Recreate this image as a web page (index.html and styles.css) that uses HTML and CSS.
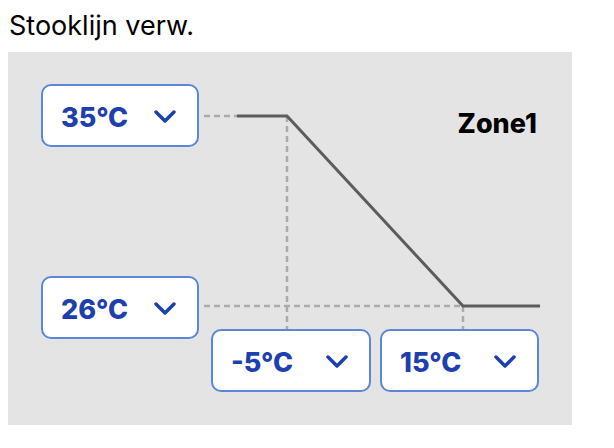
FILE: index.html
```html
<!DOCTYPE html>
<html lang="nl">
<head>
  <meta charset="UTF-8">
  <title>Stooklijn verw.</title>
  <link rel="stylesheet" href="styles.css">
</head>
<body>
  <h1 class="title">Stooklijn verw.</h1>

  <div class="curve-panel">
    <svg class="curve" width="564" height="373" viewBox="0 0 564 373">
      <!-- guide lines from the selectors to the curve corners -->
      <g class="guide">
        <line x1="196" y1="64" x2="229" y2="64" />
        <line x1="279" y1="64" x2="279" y2="277" />
        <line x1="196" y1="254" x2="455" y2="254" />
        <line x1="455" y1="254" x2="455" y2="277" />
      </g>
      <polyline class="line" points="229,64 279,64 455,254 532,254" />
    </svg>

    <div class="zone">Zone1</div>

    <button class="select max-temp">
      <span>35°C</span>
      <svg class="chevron" width="22" height="13" viewBox="0 0 22 13"><polyline points="2,2 11,11 20,2" /></svg>
    </button>
    <button class="select min-temp">
      <span>26°C</span>
      <svg class="chevron" width="22" height="13" viewBox="0 0 22 13"><polyline points="2,2 11,11 20,2" /></svg>
    </button>
    <button class="select low-outside">
      <span>-5°C</span>
      <svg class="chevron" width="22" height="13" viewBox="0 0 22 13"><polyline points="2,2 11,11 20,2" /></svg>
    </button>
    <button class="select high-outside">
      <span>15°C</span>
      <svg class="chevron" width="22" height="13" viewBox="0 0 22 13"><polyline points="2,2 11,11 20,2" /></svg>
    </button>
  </div>
</body>
</html>
```

FILE: styles.css
```css
* {
  box-sizing: border-box;
  margin: 0;
  padding: 0;
}

body {
  background: #ffffff;
  font-family: Inter, 'Liberation Sans', sans-serif;
  color: #000;
}

.title {
  margin: 10px 0 0 9px;
  font-size: 27px;
  font-weight: 400;
  line-height: 32px;
}

.curve-panel {
  position: relative;
  width: 564px;
  height: 373px;
  margin: 10px 0 0 8px;
  background: #e4e4e4;
}

.curve {
  position: absolute;
  top: 0;
  left: 0;
}

.guide line {
  stroke: #ababab;
  stroke-width: 2.5;
  stroke-dasharray: 6 4;
}

.line {
  fill: none;
  stroke: #5c5c5c;
  stroke-width: 3;
  stroke-linejoin: miter;
}

.zone {
  position: absolute;
  top: 56px;
  right: 35px;
  font-size: 27px;
  font-weight: 800;
  line-height: 32px;
}

.select {
  position: absolute;
  display: flex;
  align-items: center;
  width: 158px;
  height: 63px;
  padding: 0 21px 0 18px;
  background: #fff;
  border: 2px solid #5b87da;
  border-radius: 10px;
  color: #1e40af;
  font-family: inherit;
  font-size: 27px;
  font-weight: 800;
  cursor: pointer;
}

.select span {
  padding-top: 4px;
}

.chevron {
  margin-left: auto;
  margin-top: 1px;
}

.chevron polyline {
  fill: none;
  stroke: #1e40af;
  stroke-width: 3.5;
  stroke-linecap: round;
  stroke-linejoin: round;
}

.max-temp {
  left: 33px;
  top: 32px;
}

.min-temp {
  left: 33px;
  top: 224px;
}

.low-outside {
  left: 203px;
  top: 277px;
  width: 160px;
}

.high-outside {
  left: 372px;
  top: 277px;
  width: 159px;
}
```
